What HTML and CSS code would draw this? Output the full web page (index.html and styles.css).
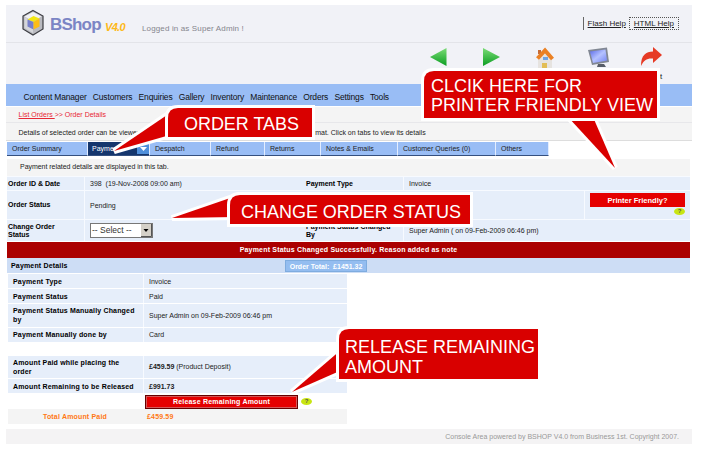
FILE: index.html
```html
<!DOCTYPE html>
<html lang="en">
<head>
<meta charset="utf-8">
<title>BShop - Order Details</title>
<link rel="stylesheet" href="styles.css">
</head>
<body>
<div class="page">
  <header class="header">
    <svg class="logo" viewBox="0 0 24 28" width="24" height="28">
      <path d="M12 1.500 22 7V20L12 26 2 20V7z" fill="#b9bac0" stroke="#3c3d42" stroke-width="1.200"/>
      <path d="M12 3 20.500 7.500 12 12.500 3.500 7.500z" fill="#f1f1f4"/>
      <path d="M3.500 8 12 12.500V24L3.500 19z" fill="#d5d6da"/>
      <path d="M12.500 7 18.500 9.500 12.500 13 6.500 10.500z" fill="#f3e713"/>
      <path d="M6.500 10.500 12.500 13V20.500L6.500 17.500z" fill="#777fca"/>
      <path d="M18.500 9.500 12.500 13V20.500L18.500 17.500z" fill="#fdbd14"/>
    </svg>
    <span class="brand">BShop</span><span class="version">V4.0</span>
    <span class="login">Logged in as Super Admin !</span>
    <nav class="help"><a>Flash Help</a><a class="focus">HTML Help</a></nav>
  </header>
  <div class="toolbar">
    <svg class="tools" viewBox="420 43 250 41" width="250" height="41">
      <defs>
        <linearGradient id="green" x2="0" y2="1"><stop stop-color="#7bdc76"/><stop offset="1" stop-color="#0b9d22"/></linearGradient>
        <linearGradient id="screen" x2="1" y2="1"><stop stop-color="#5868e8"/><stop offset=".5" stop-color="#b5c2ff"/><stop offset="1" stop-color="#7080f3"/></linearGradient>
      </defs>
      <path d="M430 57 446.500 48V66z" fill="url(#green)"/>
      <path d="M500 57 483 48V66z" fill="url(#green)"/>
      <path d="M538 58 545 51 552 58V69H538z" fill="#e6e3e0"/>
      <path d="M538 50h3v4h-3z" fill="#c76b35"/>
      <path d="M537.500 58.500 545 50.500 552.500 59" fill="none" stroke="#eb8124" stroke-width="4"/>
      <path d="M543 57h5v3h-5z" fill="#6fa4e4"/><path d="M542 63h5v6h-5z" fill="#e2bd55"/>
      <path d="M588 50 607 47.500 609 62 592 65z" fill="#818793"/>
      <path d="M590 51.500 605.500 49.500 607 60.500 593 63z" fill="url(#screen)"/>
      <path d="M598 64h6l2 3h-9z" fill="#575d68"/>
      <path d="M641 66C641 55 646 51.500 653 51.500V47L662 55 653 63V58.500C647 58 644 60 641 66z" fill="#e63a25"/>
    </svg>
    <span class="exit">Exit</span>
  </div>
  <nav class="menu"><a>Content Manager</a><a>Customers</a><a>Enquiries</a><a>Gallery</a><a>Inventory</a><a>Maintenance</a><a>Orders</a><a>Settings</a><a>Tools</a></nav>
  <div class="crumbs"><a>List Orders </a>&gt;&gt; Order Details</div>
  <div class="intro"><span>Details of selected order can be viewed</span><span>format. Click on tabs to view its details</span></div>
  <nav class="tabs"><a>Order Summary</a><a class="active">Payment<svg viewBox="0 0 12 12" width="12" height="12"><path d="M0 0h12v12H0z" fill="#4f8fdb"/><path d="M3 5h7L6.500 9z" fill="#fff"/></svg></a><a>Despatch</a><a>Refund</a><a>Returns</a><a>Notes &amp; Emails</a><a>Customer Queries (0)</a><a>Others</a></nav>
  <div class="note">Payment related details are displayed in this tab.</div>
  <section class="order">
    <div class="row r1"><b>Order ID &amp; Date</b><span>398&nbsp; (19-Nov-2008 09:00 am)</span><b>Payment Type</b><span>Invoice</span></div>
    <div class="row r2"><b>Order Status</b><span>Pending</span><div class="print"><button class="red-btn">Printer Friendly?</button><i class="tip">?</i></div></div>
    <div class="row r3"><b>Change Order<br>Status</b><span><span class="select">-- Select --<svg viewBox="0 0 11 13" width="11" height="13"><path d="M0 0h11v13H0z" fill="#d4d0c8"/><path d="M10.500 0v12.500H0" fill="none" stroke="#555"/><path d="M2.500 5h5L5 8z"/></svg></span></span><b>Payment Status Changed<br>By</b><span>Super Admin ( on 09-Feb-2009 06:46 pm)</span></div>
  </section>
  <div class="message">Payment Status Changed Successfully. Reason added as note</div>
  <div class="heading"><b>Payment Details</b><span class="total">Order Total:&nbsp; £1451.32</span></div>
  <section class="payment">
    <div class="prow h14"><b>Payment Type</b><span>Invoice</span></div>
    <div class="prow h14"><b>Payment Status</b><span>Paid</span></div>
    <div class="prow h22"><b>Payment Status Manually Changed<br>by</b><span>Super Admin on 09-Feb-2009 06:46 pm</span></div>
    <div class="prow h14"><b>Payment Manually done by</b><span>Card</span></div>
    <div class="prow h22 split"><b>Amount Paid while placing the<br>order</b><span><strong>£459.59</strong> (Product Deposit)</span></div>
    <div class="prow h14"><b>Amount Remaining to be Released</b><span><strong>£991.73</strong></span></div>
    <div class="release"><button class="red-btn framed">Release Remaining Amount</button><i class="tip">?</i></div>
    <div class="paid"><b>Total Amount Paid</b><strong>£459.59</strong></div>
  </section>
  <footer class="footer">Console Area powered by BSHOP V4.0 from Business 1st. Copyright 2007.</footer>
</div>
<svg class="callouts" viewBox="0 0 702 450" width="702" height="450">
  <g class="shape">
    <path d="M114 151 170 113V135z"/><path d="M168 137V118Q168 108 178 108H312V137z"/>
    <path d="M172 218 236 196V217z"/><path d="M230 224V205Q230 195 240 195H470V224z"/>
    <path d="M568 117H593L615 168z"/><path d="M424 118V81Q424 71 434 71H657V118z"/>
    <path d="M292 392 342 349V370z"/><path d="M339 379V339Q339 329 349 329H538V379z"/>
  </g>
  <g class="label">
    <text x="184" y="130" textLength="115">ORDER TABS</text>
    <text x="241" y="218" textLength="220">CHANGE ORDER STATUS</text>
    <text x="431" y="92" textLength="151">CLCIK HERE FOR</text>
    <text x="431" y="111" textLength="222">PRINTER FRIENDLY VIEW</text>
    <text x="345" y="353" textLength="190">RELEASE REMAINING</text>
    <text x="345" y="373" textLength="78">AMOUNT</text>
  </g>
</svg>
</body>
</html>
```
FILE: styles.css
```css
* { box-sizing: border-box; }
body { margin: 0; width: 702px; height: 450px; overflow: hidden; background: #fff; position: relative; font: 7px/9px "Liberation Sans", Arial, sans-serif; color: #222; }
.page { width: 686px; margin-left: 6px; padding-top: 5px; }
a, span, b, strong { white-space: nowrap; }
b, strong { letter-spacing: .17px; }
.header { height: 38px; background: #f1f2f7; border-bottom: 1px solid #e3e4e9; display: flex; align-items: center; padding-left: 15px; }
.logo { margin-bottom: 1px; }
.brand { font: bold 17px/20px "Liberation Sans", sans-serif; color: #7b85c5; margin: 2px 0 0 5px; width: 50px; letter-spacing: -.8px; }
.version { font: italic bold 11px/12px "Liberation Sans", sans-serif; color: #fdb918; margin: 6px 0 0 5px; width: 20px; letter-spacing: -.7px; }
.login { font-size: 8px; color: #85858d; margin: 9px 0 0 17px; letter-spacing: .14px; }
.help { margin: 0 13px 0 auto; display: flex; align-items: center; border-left: 1px solid #666; padding-left: 4px; font-size: 8px; line-height: 11px; }
.help a { text-decoration: underline; }
.help .focus { border: 1px dotted #555; padding: 0 4px; margin: 0 0 0 3px; }
.toolbar { height: 41px; background: #f1f2f7; display: flex; padding-left: 414px; position: relative; }
.exit { position: absolute; left: 643px; top: 29px; font-size: 8px; }
.menu { height: 22px; background: #99bdf5; display: flex; gap: 6.200px; padding-left: 17.500px; font-size: 8.500px; letter-spacing: -.17px; line-height: 27px; color: #111; }
.crumbs { height: 17px; border-top: 1px solid #fff; border-bottom: 1px solid #e7e7ea; background: #f4f4f4; padding-left: 12.500px; line-height: 16px; color: #e82735; font-size: 7px; }
.crumbs a { text-decoration: underline; }
.intro { height: 18px; background: #f4f4f4; border-bottom: 1px solid #ddd; padding-left: 12.500px; line-height: 19px; display: grid; grid-template-columns: 288.500px 1fr; }
.tabs { width: 542px; height: 14px; margin-top: 1px; margin-left: 1px; display: grid; grid-template-columns: 81px 62px 61px 54px 56px 77px 98px 53px; line-height: 13px; }
.tabs a { background: #99bdf5; border-right: 1px solid #e3edff; border-bottom: 1px solid #35507f; padding-left: 5px; }
.tabs .active { background: #15366d; color: #fff; display: flex; justify-content: space-between; padding-left: 4px; }
.note { height: 17px; margin: 3px 2px 0 1px; background: #f4f4f4; padding-left: 13px; line-height: 16px; letter-spacing: -.04px; }
.order { width: 683px; margin-left: 1px; }
.row { background: #e6eefa; border-top: 1px solid #f7faff; display: grid; grid-template-columns: 77px 221px 98px 287px; align-items: center; }
.row > b { padding-left: 1px; color: #000; line-height: 8px; letter-spacing: 0; }
.row > span { padding-left: 5px; }
.row > b + span { border-left: 1px solid #f7faff; height: 100%; display: flex; align-items: center; }
.r1 { height: 14px; } .r2 { height: 29px; grid-template-columns: 77px 500px 106px; } .r3 { height: 22px; }
.print { height: 100%; border-left: 1px solid #f7faff; padding: 2px 5px; display: flex; flex-direction: column; align-items: flex-end; }
.red-btn { display: block; width: 95px; height: 14px; padding: 0; border: 0; background: #e50000; color: #fff; font: bold 7.500px/13px "Liberation Sans", sans-serif; }
.tip { display: block; width: 11px; height: 7px; border-radius: 50%; background: #c8e512; color: #555; font: bold 6px/7px "Liberation Sans", sans-serif; text-align: center; margin-top: 1px; }
.select { display: flex; align-items: center; justify-content: space-between; width: 63px; height: 15px; background: #fff; border: 1px solid #777; font-size: 8.500px; padding-left: 1px; color: #333; }
.message { margin-left: 1px; width: 683px; height: 16px; margin-top: 1px; background: #ab0000; color: #fff; text-align: center; line-height: 15px; font-weight: bold; letter-spacing: .19px; }
.heading { margin-left: 1px; width: 683px; height: 15px; background: #cdddf5; display: grid; grid-template-columns: 278px 82px; align-items: center; }
.heading b { padding-left: 4px; color: #000; }
.total { height: 12px; border: 1px solid #7facdf; background: #94bdf0; color: #fff; font-weight: bold; text-align: center; line-height: 11px; }
.payment { width: 339px; margin: 1px 0 0 2px; }
.prow { background: #e6eefa; display: grid; grid-template-columns: 135px 204px; margin-bottom: 1px; }
.prow > b { padding-left: 5px; align-self: center; color: #000; }
.prow > span { border-left: 1px solid #f7faff; padding-left: 5px; display: flex; align-items: center; white-space: pre; }
.prow strong { letter-spacing: 0; }
.h14 { height: 14px; } .h22 { height: 22.500px; } .split { margin-top: 14px; }
.release { height: 15px; display: flex; align-items: center; padding-left: 137px; }
.framed { width: 153px; border: 1px solid #650000; line-height: 11px; font-size: 7px; letter-spacing: .2px; box-shadow: inset 0 0 0 1px #d45a5a; }
.release .tip { margin: 0 0 0 3px; }
.paid { height: 15px; background: #f4f4f4; color: #ff7814; display: grid; grid-template-columns: 139px 1fr; align-items: center; }
.paid b { padding-left: 35px; }
.footer { height: 15px; margin-top: 5px; background: #f4f3f4; color: #999; text-align: right; padding-right: 13px; line-height: 15px; }
.callouts { position: absolute; left: 0; top: 0; }
.shape path { fill: #d90000; stroke: #fff; stroke-width: 6px; paint-order: stroke; }
.label { fill: #fff; font: 18px "Liberation Sans", Arial, sans-serif; }
```
